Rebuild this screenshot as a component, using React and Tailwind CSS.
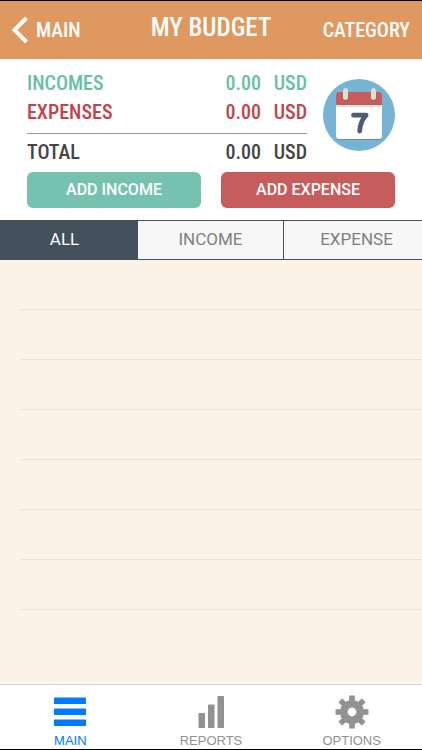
import React, { useState } from 'react';

const resumen = [
    { label: 'INCOMES', monto: '0.00', color: 'text-[#69bfa6]', celda: '' },
    { label: 'EXPENSES', monto: '0.00', color: 'text-[#c2434b]', celda: 'pb-1.5' },
    { label: 'TOTAL', monto: '0.00', color: 'text-[#444444] border-t border-[#999999]', celda: 'pt-1' },
];

const filtros = ['ALL', 'INCOME', 'EXPENSE'];

function MenuIcon() {
    return (
        <svg viewBox="0 0 34 34" className="h-[34px] w-[34px]" fill="currentColor" aria-hidden="true">
            <rect x="1" y="2.6" width="32" height="6.5" rx="0.6" />
            <rect x="1" y="13.6" width="32" height="6.5" rx="0.6" />
            <rect x="1" y="24.6" width="32" height="6.5" rx="0.6" />
        </svg>
    );
}

function BarsIcon() {
    return (
        <svg viewBox="0 0 34 34" className="h-[34px] w-[34px]" fill="currentColor" aria-hidden="true">
            <rect x="4.5" y="18" width="6.5" height="15" rx="0.8" />
            <rect x="14" y="9.5" width="6.5" height="23.5" rx="0.8" />
            <rect x="23.5" y="1" width="6.5" height="32" rx="0.8" />
        </svg>
    );
}

function GearIcon() {
    return (
        <svg viewBox="0 0 34 34" className="h-[34px] w-[34px]" aria-hidden="true">
            <circle cx="17" cy="17" r="8.2" fill="none" stroke="currentColor" strokeWidth="7.6" />
            {[0, 45, 90, 135, 180, 225, 270, 315].map(a => (
                <rect key={a} x="14.2" y="0.5" width="5.6" height="6.5" rx="0.5" fill="currentColor" transform={`rotate(${a} 17 17)`} />
            ))}
        </svg>
    );
}

function CalendarIcon() {
    return (
        <svg viewBox="0 0 72 72" className="h-[72px] w-[72px]" aria-hidden="true">
            <circle cx="36" cy="36" r="36" fill="#77b3d4" />
            <rect x="13" y="15" width="46" height="46" rx="3" fill="#5f8fab" />
            <rect x="13" y="14" width="46" height="46" rx="3" fill="#ffffff" />
            <path d="M13 26V16a3 3 0 0 1 3-3h40a3 3 0 0 1 3 3v10z" fill="#c75c5c" />
            <rect x="13" y="26" width="46" height="2" fill="#e3e3e3" />
            <rect x="20" y="9.5" width="5" height="12.5" rx="2.5" fill="#a84b4b" />
            <rect x="48" y="9.5" width="5" height="12.5" rx="2.5" fill="#a84b4b" />
            <rect x="20" y="9" width="5" height="12" rx="2.5" fill="#e0e0d1" />
            <rect x="48" y="9" width="5" height="12" rx="2.5" fill="#e0e0d1" />
            <path d="M30.5 36.2h12.6q-6 6.500-6.400 15.800" fill="none" stroke="#4f5d73" strokeWidth="4.8" strokeLinecap="round" strokeLinejoin="round" />
        </svg>
    );
}

const secciones = [
    { id: 'MAIN', Icono: MenuIcon },
    { id: 'REPORTS', Icono: BarsIcon },
    { id: 'OPTIONS', Icono: GearIcon },
];

function App() {
    const [filtro, setFiltro] = useState('ALL');
    const [seccion, setSeccion] = useState('MAIN');

    return (
        <div className="flex min-h-screen flex-col overflow-hidden border-y border-black bg-white font-['Roboto_Condensed','Roboto',sans-serif]">
            <header className="grid h-[58px] grid-cols-[1fr_auto_1fr] items-center bg-[#df985f] px-3 text-white">
                <button type="button" className="flex items-center gap-2 text-[20px] leading-7 font-medium">
                    <svg viewBox="0 0 16 28" className="h-7 w-4" fill="none" stroke="currentColor" strokeWidth="4" aria-hidden="true">
                        <path d="M14.5 2L2.5 14l12 12" />
                    </svg>
                    MAIN
                </button>
                <h1 className="pb-1 text-[25px] leading-8 font-medium">MY BUDGET</h1>
                <button type="button" className="justify-self-end text-[20px] leading-7 font-medium">CATEGORY</button>
            </header>

            <section className="px-[27px] pt-2.5 pb-3">
                <div className="flex justify-between gap-4">
                    <table className="grow text-[20px] leading-[29px] font-medium">
                        <tbody>
                            {resumen.map(r => (
                                <tr key={r.label} className={r.color}>
                                    <th scope="row" className={`text-left font-medium ${r.celda}`}>{r.label}</th>
                                    <td className={`text-right ${r.celda}`}>{r.monto}</td>
                                    <td className={`w-[46px] text-right ${r.celda}`}>USD</td>
                                </tr>
                            ))}
                        </tbody>
                    </table>
                    <button type="button" aria-label="Calendar" className="mt-2.5 h-[72px] shrink-0">
                        <CalendarIcon />
                    </button>
                </div>
                <div className="mt-[5px] grid grid-cols-2 gap-5 font-['Roboto',sans-serif] text-[16px] font-medium text-white">
                    <button type="button" className="h-9 rounded-md bg-[#76c2af]">ADD INCOME</button>
                    <button type="button" className="h-9 rounded-md bg-[#c75c5c]">ADD EXPENSE</button>
                </div>
            </section>

            {/* Filtros, sobresalen un poco a cada lado */}
            <div className="-mx-2 flex h-10 border-y border-[#44505c] font-['Roboto',sans-serif] text-[17px]">
                {filtros.map(f => (
                    <button
                        key={f}
                        type="button"
                        aria-pressed={filtro === f}
                        onClick={() => setFiltro(f)}
                        className={`flex-1 border-r border-[#44505c] ${filtro === f ? 'bg-[#44505c] text-white' : 'bg-[#f7f7f7] text-[#7f7f7f]'}`}
                    >
                        {f}
                    </button>
                ))}
            </div>

            <main className="grow bg-[#fbf2e8] pl-5">
                {[1, 2, 3, 4, 5, 6, 7].map(n => (
                    <div key={n} className="h-[50px] border-b border-[#ece4db]" />
                ))}
            </main>

            <nav className="grid h-[65px] grid-cols-3 border-t border-[#d9d5d0] bg-white font-['Liberation_Sans',sans-serif] text-[13px] leading-4">
                {secciones.map(({ id, Icono }) => (
                    <button
                        key={id}
                        type="button"
                        onClick={() => setSeccion(id)}
                        className={`flex flex-col items-center justify-end gap-1 ${seccion === id ? 'text-[#007aff]' : 'text-[#929292]'}`}
                    >
                        <Icono />
                        {id}
                    </button>
                ))}
            </nav>
        </div>
    );
}

export default App;
